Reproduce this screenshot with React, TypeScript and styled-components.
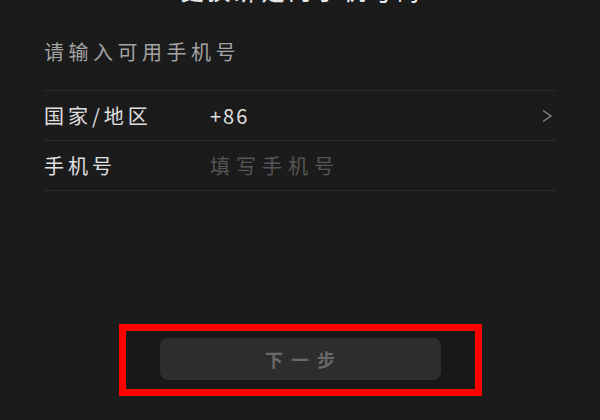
import React from "react";
import styled, { createGlobalStyle } from "styled-components";

const GlobalStyle = createGlobalStyle`
  html, body {
    margin: 0;
    padding: 0;
    background: #1b1b1b;
  }
  body {
    font-family: "Noto Sans CJK SC", "Noto Sans", sans-serif;
  }
`;

const Screen = styled.div`
  width: 600px;
  height: 420px;
  overflow: hidden;
  background: #1b1b1b;
  display: flex;
  flex-direction: column;
`;

const Header = styled.div`
  margin-top: -21px;
  height: 22px;
  padding: 0 26px;
  display: flex;
  align-items: center;
`;

const BackIcon = styled.svg`
  width: 14px;
  height: 22px;
  flex-shrink: 0;
`;

const Title = styled.h1`
  flex: 1;
  margin: 0 14px 0 0;
  font-size: 23px;
  line-height: 22px;
  font-weight: 500;
  color: #e8e8e8;
  text-align: center;
  letter-spacing: 4px;
  text-indent: 4px;
`;

const Form = styled.div`
  padding: 0 44px;
  display: flex;
  flex-direction: column;
`;

const Hint = styled.p`
  margin: 39px 0 0;
  height: 50px;
  font-size: 20px;
  line-height: 24px;
  color: #a3a3a3;
  letter-spacing: 4.5px;
  border-bottom: 1px solid #2b2b2b;
`;

const Row = styled.div`
  height: 49px;
  display: flex;
  align-items: center;
  border-bottom: 1px solid #2b2b2b;
`;

const Label = styled.span`
  width: 166px;
  font-size: 20px;
  color: #e0e0e0;
  letter-spacing: 4px;
`;

const Value = styled.span<{ $placeholder?: boolean }>`
  flex: 1;
  font-size: 20px;
  color: ${(p) => (p.$placeholder ? "#565656" : "#e0e0e0")};
  letter-spacing: ${(p) => (p.$placeholder ? "6px" : "2px")};
`;

const Chevron = styled.svg`
  width: 12px;
  height: 14px;
  margin-right: 3px;
`;

const Footer = styled.div`
  margin-top: auto;
  margin-bottom: 24px;
  display: flex;
  justify-content: center;
`;

const Highlight = styled.div`
  width: 349px;
  padding: 7px 0 9px;
  border: 7px solid #ff0000;
  background: #181818;
  display: flex;
  justify-content: center;
`;

const NextButton = styled.button`
  width: 281px;
  height: 42px;
  border: none;
  border-radius: 8px;
  background: #2d2d2d;
  color: #696969;
  font-family: inherit;
  font-size: 18px;
  font-weight: 700;
  letter-spacing: 8px;
  text-indent: 8px;
`;

export default function App() {
  return (
    <Screen>
      <GlobalStyle />
      <Header>
        <BackIcon viewBox="0 0 14 22">
          <path d="M11 2 L3 11 L11 20" fill="none" stroke="#6a6a6a" strokeWidth="2" />
        </BackIcon>
        <Title>更换绑定的手机号码</Title>
      </Header>
      <Form>
        <Hint>请输入可用手机号</Hint>
        <Row>
          <Label>国家/地区</Label>
          <Value>+86</Value>
          <Chevron viewBox="0 0 12 14">
            <path d="M2 1.5 L10 7 L2 12.5" fill="none" stroke="#8a8a8a" strokeWidth="1.3" />
          </Chevron>
        </Row>
        <Row>
          <Label>手机号</Label>
          <Value $placeholder>填写手机号</Value>
        </Row>
      </Form>
      <Footer>
        <Highlight>
          <NextButton disabled>下一步</NextButton>
        </Highlight>
      </Footer>
    </Screen>
  );
}
